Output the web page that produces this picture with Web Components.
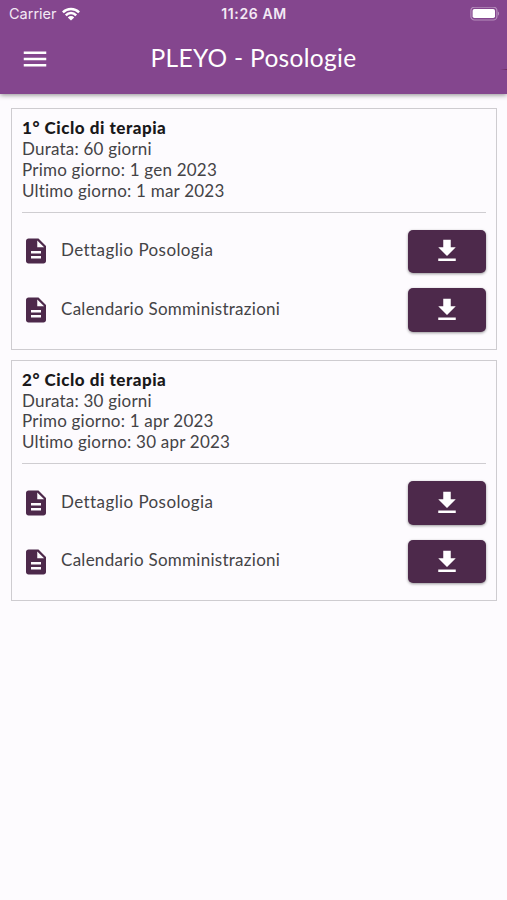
<!DOCTYPE html>
<html lang="it">
<head>
<meta charset="utf-8">
<meta name="viewport" content="width=device-width, initial-scale=1">
<title>PLEYO - Posologie</title>
<style>
  html, body {
    margin: 0;
    min-height: 100%;
    background: #fdfbfe;
    font-family: Lato, "Open Sans", sans-serif;
  }
</style>
</head>
<body>
<pleyo-app>
  <status-bar slot="header" carrier="Carrier" time="11:26 AM"></status-bar>
  <app-toolbar slot="header">PLEYO - Posologie</app-toolbar>

  <therapy-cycle>
    <span slot="title">1° Ciclo di terapia</span>
    <span>Durata: 60 giorni</span>
    <span>Primo giorno: 1 gen 2023</span>
    <span>Ultimo giorno: 1 mar 2023</span>
    <document-row slot="documents" style="letter-spacing: .41px">Dettaglio Posologia</document-row>
    <document-row slot="documents">Calendario Somministrazioni</document-row>
  </therapy-cycle>

  <therapy-cycle>
    <span slot="title">2° Ciclo di terapia</span>
    <span>Durata: 30 giorni</span>
    <span>Primo giorno: 1 apr 2023</span>
    <span>Ultimo giorno: 30 apr 2023</span>
    <document-row slot="documents" style="letter-spacing: .41px">Dettaglio Posologia</document-row>
    <document-row slot="documents">Calendario Somministrazioni</document-row>
  </therapy-cycle>
</pleyo-app>

<script>
class PleyoApp extends HTMLElement {

  connectedCallback() {
    const shadowRoot = this.attachShadow({mode: 'open'})
    shadowRoot.innerHTML = `
    <style>
        :host {
            display: block;
        }
        header {
            height: 94px;
            background: linear-gradient(90deg, transparent, #6c2a62) right 69px / 7px 1px no-repeat #84468e;
            color: #fff;
            box-shadow: 0 1px 5px rgba(0, 0, 0, .45);
        }
        main {
            display: flex;
            flex-direction: column;
            gap: 10px;
            padding: 14.4px 10px 10px 11px;
        }
    </style>

    <header><slot name="header"></slot></header>
    <main><slot></slot></main>
    `
  }
}

class StatusBar extends HTMLElement {

  connectedCallback() {
    const shadowRoot = this.attachShadow({mode: 'open'})
    shadowRoot.innerHTML = `
    <style>
        :host {
            display: grid;
            grid-template-columns: 1fr auto 1fr;
            align-items: center;
            height: 27px;
            padding: 0 8px 0 9px;
            font: 14.5px/27px Inter, sans-serif;
            color: #f3e9f5;
        }
        .carrier {
            display: flex;
            align-items: center;
            gap: 5px;
        }
        .time {
            font-size: 14px;
            font-weight: 600;
            letter-spacing: .6px;
        }
        .battery {
            justify-self: end;
        }
        svg {
            display: block;
        }
    </style>

    <div class="carrier">
      <span>${this.getAttribute('carrier')}</span>
      <svg width="18" height="14" viewBox="0 0 18 14">
        <g fill="none" stroke="#fff" stroke-width="2.5">
          <path d="M.9 5.3a11.5 11.5 0 0 1 16.2 0"/>
          <path d="M3.8 8.3a7.3 7.3 0 0 1 10.4 0"/>
        </g>
        <path fill="#fff" d="M9 13.6 5.8 10.4a4.5 4.5 0 0 1 6.4 0z"/>
      </svg>
    </div>
    <div class="time">${this.getAttribute('time')}</div>
    <svg class="battery" width="29" height="14" viewBox="0 0 29 14">
      <rect x=".9" y=".2" width="26" height="12.8" rx="3.6" fill="none" stroke="#b58dbc" stroke-width="1.2"/>
      <rect x="2.6" y="2" width="22.4" height="9" rx="1.8" fill="#fff"/>
      <path fill="#b58dbc" d="M27.9 4.5c1.600.7 1.600 3.500 0 4.200z"/>
    </svg>
    `
  }
}

class AppToolbar extends HTMLElement {

  connectedCallback() {
    const shadowRoot = this.attachShadow({mode: 'open'})
    shadowRoot.innerHTML = `
    <style>
        :host {
            display: grid;
            grid-template-columns: 1fr auto 1fr;
            height: 62px;
            padding: 0 20px;
        }
        button {
            justify-self: start;
            width: 30px;
            height: 30px;
            margin: 17px 0 0;
            padding: 0;
            border: 0;
            background: none;
        }
        svg {
            display: block;
        }
        .title {
            font-size: 24.5px;
            line-height: 61px;
            letter-spacing: .3px;
        }
    </style>

    <button aria-label="Menu">
      <svg width="30" height="30" viewBox="0 0 24 24" fill="#fff"><path d="M3 18h18v-2H3v2zm0-5h18v-2H3v2zm0-7v2h18V6H3z"/></svg>
    </button>
    <div class="title"><slot></slot></div>
    `
  }
}

class TherapyCycle extends HTMLElement {

  connectedCallback() {
    const shadowRoot = this.attachShadow({mode: 'open'})
    shadowRoot.innerHTML = `
    <style>
        :host {
            display: block;
            box-sizing: border-box;
            height: 241.5px;
            padding: 9px 10px 0;
            border: 1px solid #ceccd0;
            font-size: 17px;
            line-height: 20.8px;
            letter-spacing: .27px;
            color: #444346;
        }
        .info {
            display: flex;
            flex-direction: column;
            align-items: flex-start;
            padding-bottom: 10px;
            border-bottom: 1px solid #cfcdd1;
            letter-spacing: .21px;
        }
        ::slotted(span) {
            letter-spacing: .21px;
        }
        ::slotted([slot="title"]) {
            font-weight: 900;
            letter-spacing: .52px;
            color: #19181a;
        }
        .documents {
            display: flex;
            flex-direction: column;
            gap: 15px;
            padding-top: 17px;
        }
    </style>

    <div class="info">
      <slot name="title"></slot>
      <slot></slot>
    </div>
    <div class="documents"><slot name="documents"></slot></div>
    `
  }
}

class DocumentRow extends HTMLElement {

  connectedCallback() {
    const shadowRoot = this.attachShadow({mode: 'open'})
    shadowRoot.innerHTML = `
    <style>
        :host {
            display: flex;
            align-items: center;
            height: 43.7px;
        }
        svg {
            display: block;
        }
        .icon {
            margin: 0 10px 0 -1px;
        }
        .name {
            flex: 1;
            padding-bottom: 2px;
        }
        button {
            display: flex;
            align-items: center;
            justify-content: center;
            width: 78.5px;
            height: 43.7px;
            padding: 0;
            border: 0;
            border-radius: 5px;
            background: #4d294b;
            box-shadow: 0 1px 3px rgba(0, 0, 0, .4);
        }
    </style>

    <svg class="icon" width="30" height="30" viewBox="0 0 24 24" fill="#4d294b"><path d="M14 2H6c-1.100 0-1.990.9-1.990 2L4 20c0 1.100.89 2 1.990 2H18c1.100 0 2-.9 2-2V8l-6-6zm2 16H8v-2h8v2zm0-4H8v-2h8v2zm-3-5V3.500L18.500 9H13z"/></svg>
    <div class="name"><slot></slot></div>
    <button aria-label="Scarica">
      <svg width="30" height="30" viewBox="0 0 24 24" fill="#fff"><path d="M19 9h-4V3H9v6H5l7 7 7-7zM5 18v2h14v-2H5z"/></svg>
    </button>
    `
  }
}

window.customElements.define('pleyo-app', PleyoApp);
window.customElements.define('status-bar', StatusBar);
window.customElements.define('app-toolbar', AppToolbar);
window.customElements.define('therapy-cycle', TherapyCycle);
window.customElements.define('document-row', DocumentRow);
</script>
</body>
</html>
